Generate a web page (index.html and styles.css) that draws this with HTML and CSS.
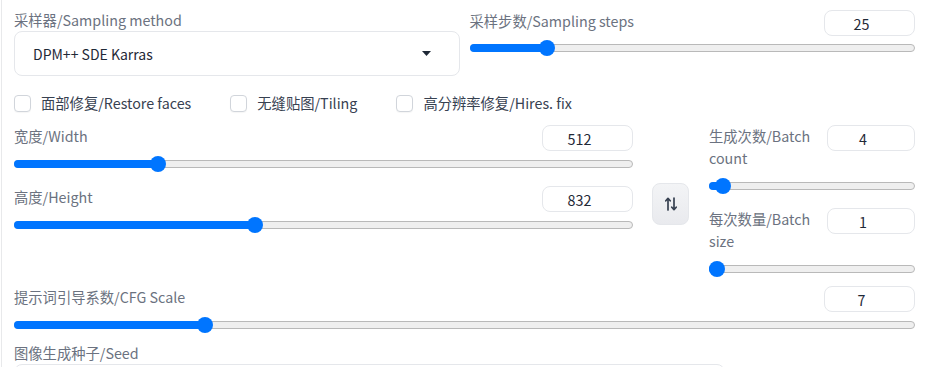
FILE: index.html
```html
<!DOCTYPE html>
<html lang="zh">
<head>
<meta charset="utf-8">
<title>txt2img settings</title>
<link rel="stylesheet" href="styles.css">
</head>
<body>
<div class="panel">
  <div class="row top-row">
    <div class="col sampler">
      <div class="lbl">采样器/Sampling method</div>
      <div class="select">
        <span class="select-value">DPM++ SDE Karras</span>
        <svg class="caret" width="9" height="5" viewBox="0 0 9 5"><path d="M0 0H9L4.5 5Z" fill="#1f2937"/></svg>
      </div>
    </div>
    <div class="col steps">
      <div class="field">
        <div class="head"><span class="lbl">采样步数/Sampling steps</span><input class="num" type="text" value="25"></div>
        <div class="slider" style="--f:0.161"><div class="track"></div><div class="fill"></div><div class="thumb"></div></div>
      </div>
    </div>
  </div>

  <div class="checks">
    <label class="check"><span class="box"></span><span class="check-text">面部修复/Restore faces</span></label>
    <label class="check"><span class="box"></span><span class="check-text">无缝贴图/Tiling</span></label>
    <label class="check"><span class="box"></span><span class="check-text">高分辨率修复/Hires. fix</span></label>
  </div>

  <div class="row dims">
    <div class="col dims-left">
      <div class="field">
        <div class="head"><span class="lbl">宽度/Width</span><input class="num" type="text" value="512"></div>
        <div class="slider" style="--f:0.2258"><div class="track"></div><div class="fill"></div><div class="thumb"></div></div>
      </div>
      <div class="field gap">
        <div class="head"><span class="lbl">高度/Height</span><input class="num" type="text" value="832"></div>
        <div class="slider" style="--f:0.387"><div class="track"></div><div class="fill"></div><div class="thumb"></div></div>
      </div>
    </div>
    <div class="swap-col">
      <button class="swap" type="button" aria-label="swap">
        <svg width="12" height="14" viewBox="0 0 12 14" fill="none" stroke="#374151" stroke-width="1.7" stroke-linecap="round" stroke-linejoin="round">
          <path d="M3 13V1.5M0.8 3.8L3 1.3L5.2 3.8"/>
          <path d="M9 1V12.5M6.8 10.2L9 12.7L11.2 10.2"/>
        </svg>
      </button>
    </div>
    <div class="col batch">
      <div class="field">
        <div class="head"><span class="lbl">生成次数/Batch count</span><input class="num" type="text" value="4"></div>
        <div class="slider" style="--f:0.0303"><div class="track"></div><div class="fill"></div><div class="thumb"></div></div>
      </div>
      <div class="field gap">
        <div class="head"><span class="lbl">每次数量/Batch size</span><input class="num" type="text" value="1"></div>
        <div class="slider" style="--f:0"><div class="track"></div><div class="fill"></div><div class="thumb"></div></div>
      </div>
    </div>
  </div>

  <div class="field cfg">
    <div class="head"><span class="lbl">提示词引导系数/CFG Scale</span><input class="num" type="text" value="7"></div>
    <div class="slider" style="--f:0.2069"><div class="track"></div><div class="fill"></div><div class="thumb"></div></div>
  </div>

  <div class="seed">
    <div class="lbl">图像生成种子/Seed</div>
    <div class="seed-input"></div>
  </div>
</div>
</body>
</html>
```

FILE: styles.css
```css
* { box-sizing: border-box; }
html, body {
  margin: 0;
  padding: 0;
  background: #ffffff;
  overflow: hidden;
}
body {
  font-family: "Noto Sans CJK SC", "Noto Sans", sans-serif;
  font-size: 14.3px;
  color: #1f2937;
}
.panel {
  margin-left: 1px;
  border-left: 1px solid #e8e9eb;
  padding: 9px 19px 0 12px;
  height: 367px;
  overflow: hidden;
}
.row {
  display: flex;
}
.top-row {
  gap: 10px;
}
.top-row .col {
  flex: 1 1 0;
  min-width: 0;
}
.lbl {
  color: #6b7280;
  line-height: 22px;
  font-size: 14.3px;
}
.select {
  height: 45px;
  border: 1px solid #e5e7eb;
  border-radius: 8px;
  display: flex;
  align-items: center;
  justify-content: space-between;
  padding: 0 28px 0 18px;
  background: #fff;
}
.select-value {
  color: #1f2937;
  font-size: 14px;
}
.steps {
  padding-top: 1px;
}
.field .head {
  display: flex;
  justify-content: space-between;
  align-items: flex-start;
  gap: 8px;
}
.num {
  width: 91px;
  height: 26px;
  flex: 0 0 auto;
  border: 1px solid #e5e7eb;
  border-radius: 8px;
  background: #fff;
  font-family: inherit;
  font-size: 14.3px;
  color: #1f2937;
  text-align: center;
  padding: 0 17px 0 1px;
  outline: none;
}
.slider {
  position: relative;
  height: 16px;
  margin-top: 5px;
}
.steps .slider {
  margin-top: 4px;
}
.track {
  position: absolute;
  left: 0;
  right: 0;
  top: 4px;
  height: 8px;
  border: 1px solid #b9b9b9;
  border-radius: 4px;
  background: #efefef;
}
.fill {
  position: absolute;
  left: 0;
  top: 4px;
  height: 8px;
  border-radius: 4px;
  background: #0075ff;
  width: calc(8px + var(--f) * (100% - 16px));
}
.thumb {
  position: absolute;
  top: 0;
  width: 16px;
  height: 16px;
  border-radius: 50%;
  background: #0075ff;
  left: calc(var(--f) * (100% - 16px));
}
.checks {
  display: flex;
  align-items: center;
  gap: 39px;
  margin-top: 16px;
  height: 22px;
}
.check {
  display: flex;
  align-items: center;
  gap: 10px;
  color: #374151;
  line-height: 22px;
}
.box {
  width: 17px;
  height: 17px;
  border: 1px solid #d1d5db;
  border-radius: 4px;
  background: #fff;
  box-shadow: 0 1px 1px rgba(0, 0, 0, 0.04);
  display: inline-block;
}
.dims {
  margin-top: 11px;
}
.dims-left {
  flex: 1 1 auto;
  min-width: 0;
}
.field.gap {
  margin-top: 14px;
}
.swap-col {
  width: 37px;
  margin: 0 20px 0 19px;
  flex: 0 0 auto;
}
.swap {
  margin-top: 58px;
  width: 37px;
  height: 42px;
  border: 1px solid #e5e7eb;
  border-radius: 8px;
  background: linear-gradient(#f3f4f6, #e9eaee);
  display: flex;
  align-items: center;
  justify-content: center;
  padding: 0;
}
.batch {
  width: 206px;
  flex: 0 0 auto;
}
.batch .num {
  width: 88px;
}
.batch .slider {
  margin-top: 9px;
}
.cfg {
  margin-top: 9px;
}
.seed {
  margin-top: 9px;
}
.seed-input {
  width: 711px;
  height: 40px;
  border: 1px solid #e5e7eb;
  border-radius: 8px;
}
```
